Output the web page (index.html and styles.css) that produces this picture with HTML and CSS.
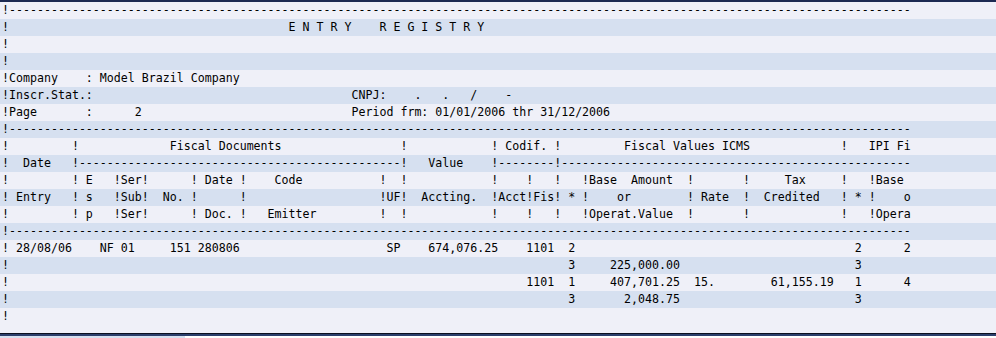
FILE: index.html
```html
<!DOCTYPE html>
<html>
<head>
<meta charset="utf-8">
<link rel="stylesheet" href="styles.css">
</head>
<body>
<div class="top-bar"></div>
<div class="list">
<div class="ln">!---------------------------------------------------------------------------------------------------------------------------------</div>
<div class="ln">!                                        E N T R Y    R E G I S T R Y</div>
<div class="ln">!</div>
<div class="ln">!</div>
<div class="ln">!Company    : Model Brazil Company</div>
<div class="ln">!Inscr.Stat.:                                     CNPJ:    .   .   /    -</div>
<div class="ln">!Page       :      2                              Period frm: 01/01/2006 thr 31/12/2006</div>
<div class="ln">!---------------------------------------------------------------------------------------------------------------------------------</div>
<div class="ln">!         !             Fiscal Documents                 !            ! Codif. !         Fiscal Values ICMS             !   IPI Fi</div>
<div class="ln">!  Date   !----------------------------------------------!   Value    !--------!--------------------------------------------------</div>
<div class="ln">!         ! E   !Ser!      ! Date !    Code           !  !            !    !   !   !Base  Amount  !       !     Tax     !   !Base</div>
<div class="ln">! Entry   ! s   !Sub!  No. !      !                   !UF!  Accting.  !Acct!Fis! * !    or        ! Rate  !  Credited   ! * !    o</div>
<div class="ln">!         ! p   !Ser!      ! Doc. !   Emitter         !  !            !    !   !   !Operat.Value  !       !             !   !Opera</div>
<div class="ln">!---------------------------------------------------------------------------------------------------------------------------------</div>
<div class="ln">! 28/08/06    NF 01     151 280806                     SP    674,076.25    1101  2                                        2      2</div>
<div class="ln">!                                                                                3     225,000.00                         3</div>
<div class="ln">!                                                                          1101  1     407,701.25  15.        61,155.19   1      4</div>
<div class="ln">!                                                                                3       2,048.75                         3</div>
<div class="ln last">!</div>
</div>
<div class="bottom-bar"></div>
<div class="strip"><div class="strip-fill"></div></div>
</body>
</html>
```

FILE: styles.css
```css
html, body {
  margin: 0;
  padding: 0;
  background: #ffffff;
}

.top-bar {
  height: 2px;
  background: #1c2a52;
}

.list {
  display: flex;
  flex-direction: column;
  font-family: "DejaVu Sans Mono", monospace;
  font-size: 11.627px;
  color: #000000;
}

.ln {
  height: 17px;
  line-height: 17px;
  padding-left: 2px;
  white-space: pre;
  overflow: hidden;
  background: #eff0f8;
}

.ln:nth-child(even) {
  background: #d6e0f0;
}

.ln.last {
  height: 25px;
}

.bottom-bar {
  height: 2px;
  border-top: 1px solid #0b1020;
  background: #2b3f6c;
}

.strip {
  height: 3px;
  background: #ffffff;
}

.strip-fill {
  width: 185px;
  height: 100%;
  background: #d6e0f0;
}
```
